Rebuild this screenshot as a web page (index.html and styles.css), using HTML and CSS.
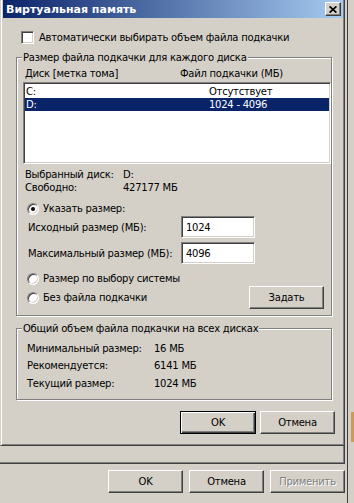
FILE: index.html
```html
<!DOCTYPE html>
<html lang="ru">
<head>
    <meta charset="UTF-8">
    <meta name="viewport" content="width=device-width, initial-scale=1.0">
    <title>Виртуальная память</title>
    <link rel="stylesheet" href="styles.css">
</head>
<body>
    <div class="screen">
        <div class="parent">
            <div class="parent-sheet"></div>
            <div class="parent-buttons">
                <button class="btn" type="button">OK</button>
                <button class="btn" type="button">Отмена</button>
                <button class="btn" type="button" disabled>Применить</button>
            </div>
        </div>
        <div class="edge-blot"></div>

        <div class="dialog">
            <div class="titlebar">
                <span class="title">Виртуальная память</span>
                <span class="close-btn">
                    <svg width="8" height="7" viewBox="0 0 8 7"><path d="M0.6 0.4 L7.4 6.6 M7.4 0.4 L0.6 6.6" stroke="#000" stroke-width="1.7" fill="none"/></svg>
                </span>
            </div>
            <div class="client">
                <label class="check-row"><span class="checkbox"></span>Автоматически выбирать объем файла подкачки</label>

                <fieldset class="group group-disk">
                    <legend>Размер файла подкачки для каждого диска</legend>
                    <div class="list-head">
                        <span class="head-disk">Диск [метка тома]</span>
                        <span>Файл подкачки (МБ)</span>
                    </div>
                    <div class="listbox">
                        <div class="list-row"><span class="row-disk">C:</span><span>Отсутствует</span></div>
                        <div class="list-row selected"><span class="row-disk">D:</span><span>1024 - 4096</span></div>
                    </div>
                    <div class="info-row first"><span class="info-label">Выбранный диск:</span><span>D:</span></div>
                    <div class="info-row"><span class="info-label">Свободно:</span><span>427177 МБ</span></div>

                    <label class="radio-row custom"><span class="radio checked"></span>Указать размер:</label>
                    <div class="size-row first">
                        <span class="size-label">Исходный размер (МБ):</span>
                        <input class="field" type="text" value="1024">
                    </div>
                    <div class="size-row">
                        <span class="size-label">Максимальный размер (МБ):</span>
                        <input class="field" type="text" value="4096">
                    </div>
                    <label class="radio-row system"><span class="radio"></span>Размер по выбору системы</label>
                    <div class="radio-row none">
                        <label class="radio-label"><span class="radio"></span>Без файла подкачки</label>
                        <button class="btn" type="button">Задать</button>
                    </div>
                </fieldset>

                <fieldset class="group group-total">
                    <legend>Общий объем файла подкачки на всех дисках</legend>
                    <div class="total-row first"><span class="total-label">Минимальный размер:</span><span>16 МБ</span></div>
                    <div class="total-row"><span class="total-label">Рекомендуется:</span><span>6141 МБ</span></div>
                    <div class="total-row last"><span class="total-label">Текущий размер:</span><span>1024 МБ</span></div>
                </fieldset>

                <div class="dialog-buttons">
                    <button class="btn default" type="button">OK</button>
                    <button class="btn" type="button">Отмена</button>
                </div>
            </div>
        </div>
    </div>
</body>
</html>
```

FILE: styles.css
```css
body {
    margin: 0;
    background-color: #d4d0c8;
    font-family: "DejaVu Sans", sans-serif;
    font-size: 10px;
    line-height: 13px;
    letter-spacing: -0.25px;
    color: #000000;
}

.screen {
    position: relative;
    width: 354px;
    height: 503px;
    overflow: hidden;
}

/* parent window behind the dialog */
.parent {
    display: flex;
    flex-direction: column;
    width: 348px;
    height: 503px;
    box-sizing: border-box;
    border-right: 1px solid #404040;
}

.parent-sheet {
    width: 345px;
    height: 464px;
    box-sizing: border-box;
    border-right: 1px solid #404040;
    border-bottom: 1px solid #404040;
    box-shadow: inset -1px -1px 0 #808080;
}

.parent-buttons {
    display: flex;
    justify-content: flex-end;
    gap: 6px;
    width: 345px;
    padding-top: 6px;
}

.edge-blot {
    position: absolute;
    right: 0;
    top: 412px;
    width: 3px;
    height: 30px;
    background-color: #c99b5c;
}

/* buttons */
.btn {
    width: 75px;
    height: 23px;
    padding: 0;
    font: inherit;
    letter-spacing: inherit;
    color: #000000;
    background-color: #d4d0c8;
    border: 1px solid;
    border-color: #ffffff #404040 #404040 #ffffff;
    box-shadow: inset -1px -1px 0 #808080;
}

.btn:disabled {
    color: #808080;
    text-shadow: 1px 1px 0 #ffffff;
}

.btn.default {
    width: 76px;
    border-color: #000000;
    box-shadow: inset 1px 1px 0 #ffffff, inset -1px -1px 0 #404040, inset -2px -2px 0 #808080;
}

/* dialog window */
.dialog {
    position: absolute;
    left: 0;
    top: -3px;
    width: 345px;
    height: 449px;
    box-sizing: border-box;
    padding: 2px 1px 2px 2px;
    background-color: #d4d0c8;
    border: 1px solid;
    border-color: #d4d0c8 #404040 #404040 #d4d0c8;
    box-shadow: inset 1px 1px 0 #ffffff, inset -1px -1px 0 #808080;
}

.titlebar {
    display: flex;
    align-items: center;
    justify-content: space-between;
    height: 18px;
    padding: 0 2px 0 3px;
    background: linear-gradient(to right, #0a246a, #a6caf0);
}

.title {
    color: #ffffff;
    font-weight: bold;
    font-size: 11px;
    letter-spacing: 0;
}

.close-btn {
    display: flex;
    align-items: center;
    justify-content: center;
    width: 16px;
    height: 14px;
    box-sizing: border-box;
    background-color: #d4d0c8;
    border: 1px solid;
    border-color: #ffffff #404040 #404040 #ffffff;
    box-shadow: inset -1px -1px 0 #808080;
}

.client {
    display: flex;
    flex-direction: column;
    padding-left: 13px;
}

.check-row {
    display: flex;
    align-items: center;
    gap: 5px;
    height: 13px;
    margin-top: 13px;
    padding-left: 5px;
}

.checkbox,
.field,
.listbox {
    box-sizing: border-box;
    background-color: #ffffff;
    border: 1px solid;
    border-color: #808080 #ffffff #ffffff #808080;
    box-shadow: inset 1px 1px 0 #404040, inset -1px -1px 0 #d4d0c8;
}

.checkbox {
    width: 13px;
    height: 13px;
}

/* group boxes */
.group {
    width: 316px;
    box-sizing: border-box;
    margin: 0;
    padding: 0;
    border: 1px solid #808080;
    box-shadow: inset 1px 1px 0 #ffffff, 1px 1px 0 #ffffff;
}

.group legend {
    margin-left: 5px;
    padding: 0 1px;
    background-color: #d4d0c8;
}

.group-disk {
    margin-top: 7px;
    padding-bottom: 6px;
}

.group-total {
    margin-top: 6px;
    padding-bottom: 9px;
}

.list-head {
    display: flex;
    margin-top: 3px;
    padding-left: 8px;
}

.head-disk {
    width: 155px;
}

.listbox {
    width: 308px;
    height: 82px;
    margin: 2px 0 0 6px;
    padding: 2px 1px;
}

.list-row {
    display: flex;
    height: 13px;
    padding-left: 1px;
}

.list-row.selected {
    background-color: #0a246a;
    color: #ffffff;
}

.row-disk {
    width: 183px;
}

.info-row {
    display: flex;
    padding-left: 8px;
}

.info-row.first {
    margin-top: 4px;
}

.info-label {
    width: 98px;
}

.radio-row {
    display: flex;
    align-items: center;
    gap: 4px;
    height: 13px;
    padding-left: 10px;
}

.radio-label {
    display: flex;
    align-items: center;
    gap: 4px;
}

.radio-row.custom,
.radio-row.system {
    margin-top: 8px;
}

.radio-row.none {
    justify-content: space-between;
    height: 23px;
    margin-top: 1px;
    padding-right: 7px;
}

.radio {
    position: relative;
    width: 12px;
    height: 12px;
    box-sizing: border-box;
    border-radius: 50%;
    background-color: #ffffff;
    border: 1px solid;
    border-color: #808080 #ffffff #ffffff #808080;
    box-shadow: inset 1px 1px 0 #404040, inset -1px -1px 0 #d4d0c8;
}

.radio.checked::after {
    content: "";
    position: absolute;
    left: 3px;
    top: 3px;
    width: 4px;
    height: 4px;
    border-radius: 50%;
    background-color: #000000;
}

.size-row {
    display: flex;
    align-items: center;
    padding-left: 11px;
    margin-top: 4px;
}

.size-row.first {
    margin-top: 1px;
}

.size-label {
    width: 153px;
}

.field {
    width: 74px;
    height: 22px;
    margin: 0;
    padding: 0 0 0 4px;
    font: inherit;
    letter-spacing: inherit;
    color: #000000;
}

.total-row {
    display: flex;
    padding-left: 10px;
    margin-top: 4px;
}

.total-row.first {
    margin-top: 7px;
}

.total-row.last {
    margin-top: 5px;
}

.total-label {
    width: 127px;
}

.dialog-buttons {
    display: flex;
    justify-content: flex-end;
    gap: 4px;
    margin-top: 11px;
    padding-right: 8px;
}
```
